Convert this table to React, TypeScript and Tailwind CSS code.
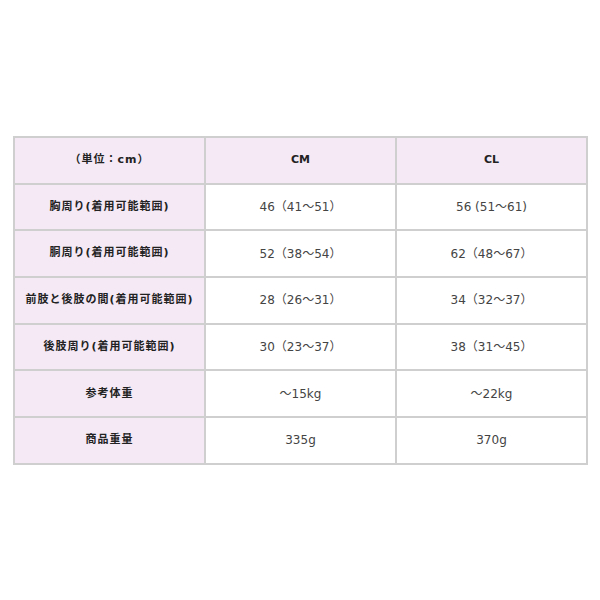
import React from "react";

const rows: [string, string, string][] = [
  ["胸周り(着用可能範囲)", "46（41～51）", "56 (51～61)"],
  ["胴周り(着用可能範囲)", "52（38～54）", "62（48～67）"],
  ["前肢と後肢の間(着用可能範囲)", "28（26～31）", "34（32～37）"],
  ["後肢周り(着用可能範囲)", "30（23～37）", "38（31～45）"],
  ["参考体重", "～15kg", "～22kg"],
  ["商品重量", "335g", "370g"],
];

export default function App() {
  return (
    <div className="w-[600px] h-[600px] bg-white pt-[136px] pl-[13px] font-['DejaVu_Sans','Noto_Sans_CJK_JP',sans-serif]">
      <div className="w-[575px] grid grid-cols-3 gap-[2px] p-[2px] bg-[#cfcfcf]">
        <div className="h-[44.7px] bg-[#f4e9f5] flex items-center justify-center text-[11px] font-bold text-[#222] tracking-[1px]">
          （単位：cm）
        </div>
        <div className="h-[44.7px] bg-[#f4e9f5] flex items-center justify-center text-[11px] font-bold text-[#222]">
          CM
        </div>
        <div className="h-[44.7px] bg-[#f4e9f5] flex items-center justify-center text-[11px] font-bold text-[#222]">
          CL
        </div>
        {rows.map((r) => (
          <React.Fragment key={r[0]}>
            <div className="h-[44.7px] bg-[#f4e9f5] flex items-center justify-center text-[11px] font-bold text-[#222] tracking-[1px]">
              {r[0]}
            </div>
            <div className="h-[44.7px] bg-white flex items-center justify-center text-[12px] text-[#444]">
              {r[1]}
            </div>
            <div className="h-[44.7px] bg-white flex items-center justify-center text-[12px] text-[#444]">
              {r[2]}
            </div>
          </React.Fragment>
        ))}
      </div>
    </div>
  );
}
